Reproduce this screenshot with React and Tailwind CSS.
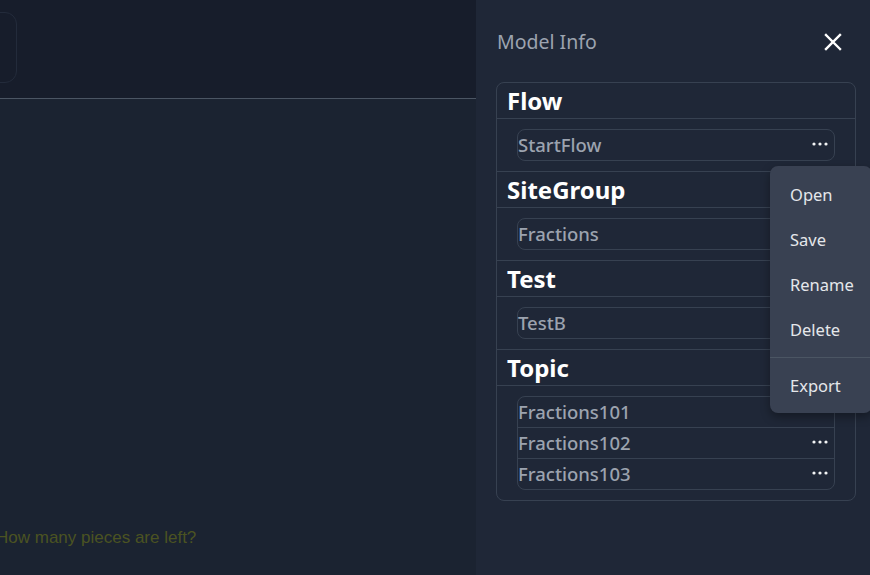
import React from "react";

const Dots = () => (
  <svg width="16" height="4" viewBox="0 0 16 4" className="mb-[3px] shrink-0">
    <circle cx="2" cy="2" r="1.6" fill="#f3f4f6" />
    <circle cx="8" cy="2" r="1.6" fill="#f3f4f6" />
    <circle cx="14" cy="2" r="1.6" fill="#f3f4f6" />
  </svg>
);

const sections = [
  { name: "Flow", items: ["StartFlow"] },
  { name: "SiteGroup", items: ["Fractions"] },
  { name: "Test", items: ["TestB"] },
  { name: "Topic", items: ["Fractions101", "Fractions102", "Fractions103"] },
];

export default function App() {
  const font = { fontFamily: '"Noto Sans", "Open Sans", sans-serif' };
  return (
    <div className="flex h-[575px] w-[870px] overflow-hidden" style={font}>
      <div className="flex w-[476px] shrink-0 flex-col bg-[#1b2331]">
        <div className="h-[99px] shrink-0 border-b border-[#4b5563] bg-[#171d2b] pt-3">
          <div className="ml-[-20px] h-[71px] w-[37px] rounded-xl border border-[#232b3b]" />
        </div>
        <div className="flex flex-1 items-end pb-[26px]">
          <span
            className="ml-[-4px] text-[17px] leading-[22px] text-[#4b5322]"
            style={{ fontFamily: '"Liberation Sans", Arial, sans-serif' }}
          >
            How many pieces are left?
          </span>
        </div>
      </div>
      <div className="relative w-[394px] shrink-0 bg-[#1f2737] pl-5 pr-[14px]">
        <div className="mt-[26px] flex h-[32px] items-center justify-between">
          <span className="pl-px text-[19.5px] text-[#9ca3af]">Model Info</span>
          <svg width="18" height="18" viewBox="0 0 18 18" className="mr-[14px]">
            <path d="M2 2 L16 16 M16 2 L2 16" stroke="#ffffff" strokeWidth="2.4" strokeLinecap="square" />
          </svg>
        </div>
        <div className="mt-6 rounded-lg border border-[#374151]">
          {sections.map((s, si) => (
            <div key={s.name} className={si < sections.length - 1 ? "border-b border-[#374151]" : ""}>
              <div className="flex h-[36px] items-center border-b border-[#374151] px-[10px] text-[24px] font-bold text-white">
                {s.name}
              </div>
              <div className="px-5 py-[10px]">
                <div className="divide-y divide-[#374151] rounded-lg border border-[#374151]">
                  {s.items.map((it) => (
                    <div key={it} className="box-content flex h-[30px] items-center justify-between pr-[6px]">
                      <span className="text-[18.5px] font-medium text-[#9ca3af]">{it}</span>
                      <Dots />
                    </div>
                  ))}
                </div>
              </div>
            </div>
          ))}
        </div>
        <div className="absolute left-[294px] top-[166px] w-[102px] rounded-lg bg-[#394152] pb-[4px] pt-[7px] shadow-[0_4px_10px_rgba(0,0,0,0.35)]">
          {["Open", "Save", "Rename", "Delete"].map((m) => (
            <div key={m} className="flex h-[45px] items-center pl-5 text-[16.5px] text-[#e5e7eb]">
              {m}
            </div>
          ))}
          <div className="mb-[6px] mt-1 h-px bg-[#4b5563]" />
          <div className="flex h-[45px] items-center pl-5 text-[16.5px] text-[#e5e7eb]">Export</div>
        </div>
      </div>
    </div>
  );
}
